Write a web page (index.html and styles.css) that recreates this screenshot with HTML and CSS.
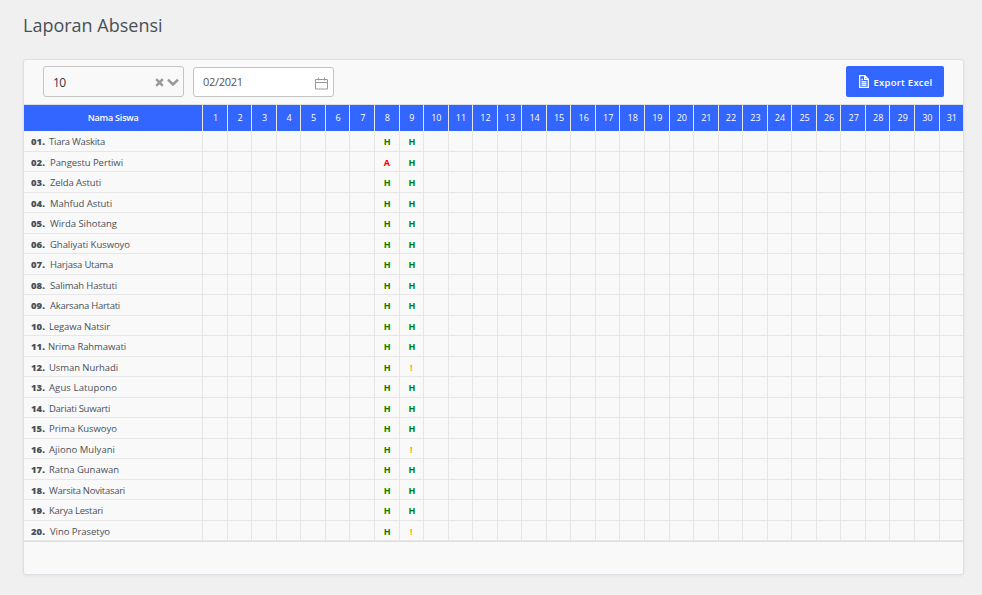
FILE: index.html
```
<!DOCTYPE html>
<html lang="id">
<head>
<meta charset="utf-8">
<title>Laporan Absensi</title>
<link rel="stylesheet" href="styles.css">
</head>
<body>
<h1 class="title">Laporan Absensi</h1>
<main class="card">
  <div class="toolbar">
    <div class="select">
      <span class="select-value">10</span>
      <svg class="clear" width="9" height="9" viewBox="0 0 9 9"><path d="M1.200 1.200l6.600 6.600M7.800 1.200L1.200 7.800"/></svg>
      <svg class="chevron" width="12" height="9" viewBox="0 0 12 9"><path d="M1 1.700L6 6.500l5-4.800"/></svg>
    </div>
    <div class="datepicker">
      <span class="date-value">02/2021</span>
      <svg class="calendar" width="13" height="13" viewBox="0 0 13 13"><path d="M.5 2.500h12v9.500H.5zM.5 5.500h12M3.500.5v3M9.500.5v3"/></svg>
    </div>
    <button class="export" type="button">
      <svg width="10" height="13" viewBox="0 0 10 13"><path d="M.7.7h5.100l3.500 3.600v8H.7zM5.700.7v3.700h3.600M2.500 6.700h5M2.500 8.500h5M2.500 10.300h5M2.500 4.500h1.500"/></svg>
      <span>Export Excel</span>
    </button>
  </div>
  <div class="table" id="table"></div>
  <div class="footer"></div>
</main>
<script src="script.js"></script>
</body>
</html>
```
FILE: styles.css
```
* { box-sizing: border-box; }
body {
  margin: 0;
  padding: 13px 18px 0 23px;
  height: 595px;
  overflow: hidden;
  background: #f0f0f0;
  color: #495057;
  font-family: "Open Sans", "Noto Sans", sans-serif;
}
.title {
  margin: 0;
  height: 46px;
  font-size: 18px;
  line-height: 24px;
  font-weight: 400;
}
.card {
  height: 516px;
  border: 1px solid #dcdfe4;
  border-radius: 3px;
  background: #f9f9f9;
  box-shadow: 0 1px 3px rgba(0, 0, 0, .06);
  overflow: hidden;
}
.toolbar {
  display: flex;
  height: 45px;
  padding: 6px 19px 0;
  border-bottom: 1px solid #dcdfe6;
}
.select, .datepicker {
  display: flex;
  align-items: center;
  width: 141px;
  height: 31px;
  border: 1px solid #c4c4c4;
  border-radius: 3px;
}
.select { padding: 1px 4px 0 9px; color: #333; font-size: 12px; }
.select-value { letter-spacing: -.6px; }
.select svg { fill: none; stroke: #999; stroke-width: 2.500; }
.clear { margin-left: auto; }
.chevron { margin-left: 3px; }
.datepicker {
  height: 30px;
  margin: 1px 0 0 9px;
  padding: 0 5px 0 9px;
  background: #fff;
  color: #555;
  font-size: 11px;
}
.date-value { margin-bottom: 1px; letter-spacing: -.3px; }
.calendar { margin: 2px 0 0 auto; fill: none; stroke: #999; stroke-width: 1; }
.export {
  display: flex;
  align-items: center;
  justify-content: center;
  gap: 5px;
  width: 98px;
  height: 31px;
  margin-left: auto;
  padding: 1px 0 0 1px;
  border: 0;
  border-radius: 2px;
  background: #3366ff;
  color: #fff;
  font: 600 9.500px "Open Sans", sans-serif;
  letter-spacing: .25px;
  white-space: nowrap;
}
.export svg { margin-top: -1px; fill: none; stroke: #fff; stroke-width: 1.300; }
.export span { margin-top: 1px; }
.row {
  display: grid;
  grid-template-columns: 178.2px repeat(31, minmax(0, 1fr));
  width: 939.1px;
  height: 20.5px;
  font-size: 9.500px;
  line-height: 21.500px;
}
.row > div { border-bottom: 1px solid #e6e6e6; white-space: nowrap; overflow: hidden; }
.row > div + div { border-left: 1px solid #e6e6e6; text-align: center; }
.head { height: 26px; background: #3366ff; color: #fff; font-size: 9px; line-height: 25px; }
.row.head > div { border-bottom: 0; }
.head .name { padding: 0; text-align: center; font-weight: 600; letter-spacing: -.2px; }
.row.head > div + div { padding-left: 1px; }
.name { padding-left: 7px; }
.name b { display: inline-block; width: 15px; font-weight: 800; }
.name span { display: inline-block; }
.name b + span { margin-left: 3.500px; }
.mark { font-family: "Noto Sans", "Open Sans", sans-serif; font-weight: 700; font-size: 9px; }
.row > .present { padding-left: 1px; }
.present { color: #008000; }
.absent { color: #f00; }
.late { color: #ffa500; }
.footer { border-top: 1px solid #dcdfe6; }
```
FILE: script.js
```
const names = [
  ["Tiara Waskita", 56], ["Pangestu Pertiwi", 73], ["Zelda Astuti", 51], ["Mahfud Astuti", 62],
  ["Wirda Sihotang", 67], ["Ghaliyati Kuswoyo", 80], ["Harjasa Utama", 63], ["Salimah Hastuti", 67],
  ["Akarsana Hartati", 70], ["Legawa Natsir", 61], ["Nrima Rahmawati", 78], ["Usman Nurhadi", 69],
  ["Agus Latupono", 68], ["Dariati Suwarti", 61], ["Prima Kuswoyo", 68], ["Ajiono Mulyani", 66],
  ["Ratna Gunawan", 70], ["Warsita Novitasari", 76], ["Karya Lestari", 54], ["Vino Prasetyo", 60]
];
const marks = { H: "present", A: "absent", "!": "late" };
const days = Array.from({ length: 31 }, (_, i) => i + 1);
const late = [11, 15, 19];

let html = '<div class="row head"><div class="name">Nama Siswa</div>' +
  days.map(d => `<div>${d}</div>`).join("") + "</div>";

names.forEach(([name], i) => {
  const status = { 8: i === 1 ? "A" : "H", 9: late.includes(i) ? "!" : "H" };
  html += `<div class="row"><div class="name"><b>${String(i + 1).padStart(2, "0")}.</b><span>${name}</span></div>`;
  html += days.map(d => status[d]
    ? `<div class="mark ${marks[status[d]]}">${status[d]}</div>`
    : "<div></div>").join("");
  html += "</div>";
});
const table = document.getElementById("table");
table.innerHTML = html;

table.querySelectorAll(".name b + span").forEach((el, i) => {
  const width = el.getBoundingClientRect().width;
  el.style.letterSpacing = (names[i][1] - width) / names[i][0].length + "px";
});
// The numerals vary in width, so the number column does too.
table.querySelectorAll(".name b").forEach((el, i) => {
  el.style.width = (i === 10 ? 13.500 : i === 0 || (i > 8 && i < 19) ? 14.500 : 15.500) + "px";
});
```
